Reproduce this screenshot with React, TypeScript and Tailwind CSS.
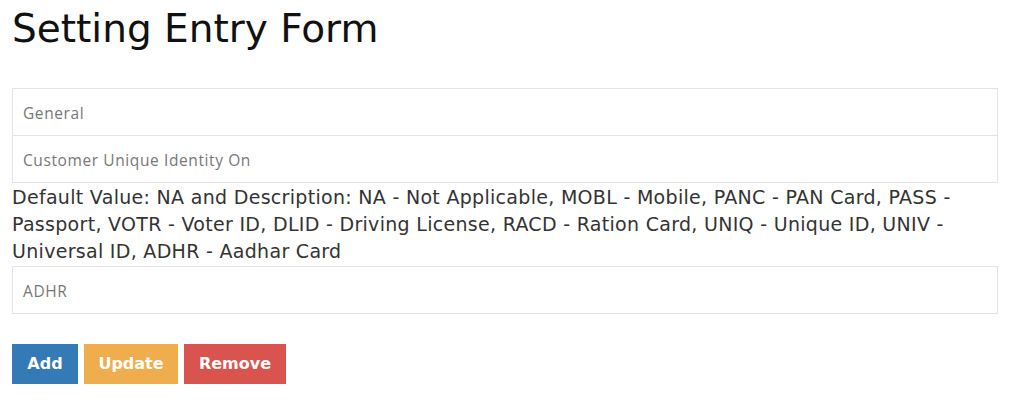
export default function App() {
  const fields = ["General", "Customer Unique Identity On"];
  return (
    <div className="min-h-[413px] w-[1024px] bg-white pl-3 pr-[26px] pt-[6px] font-['DejaVu_Sans',sans-serif]">
      <h1 className="text-[39px] leading-[46px] text-[#111]">Setting Entry Form</h1>

      <div className="mt-[36px] flex flex-col">
        {fields.map((f, i) => (
          <div
            key={f}
            className={`flex h-[48px] items-center border border-[#e3e3e3] px-[10px] pt-[3px] font-['Open_Sans',sans-serif] text-[15.5px] tracking-[0.6px] text-[#777] ${
              i > 0 ? "-mt-px" : ""
            }`}
          >
            {f}
          </div>
        ))}
      </div>

      <p className="mt-[1px] text-[19px] leading-[27px] tracking-[0.3px] text-[#333]">
        Default Value: NA and Description: NA - Not Applicable, MOBL - Mobile, PANC - PAN Card, PASS - Passport, VOTR - Voter ID,
        DLID - Driving License, RACD - Ration Card, UNIQ - Unique ID, UNIV - Universal ID, ADHR - Aadhar Card
      </p>

      <div className="mt-[1px] flex h-[48px] items-center border border-[#e3e3e3] px-[10px] pt-[3px] font-['Open_Sans',sans-serif] text-[15.5px] tracking-[0.6px] text-[#777]">
        ADHR
      </div>

      <div className="mt-[30px] flex gap-[6px]">
        <button className="h-[40px] w-[66px] bg-[#337ab7] text-[16px] font-semibold text-white">Add</button>
        <button className="h-[40px] w-[94px] bg-[#f0ad4e] text-[16px] font-semibold text-white">Update</button>
        <button className="h-[40px] w-[102px] bg-[#d9534f] text-[16px] font-semibold text-white">Remove</button>
      </div>
    </div>
  );
}
